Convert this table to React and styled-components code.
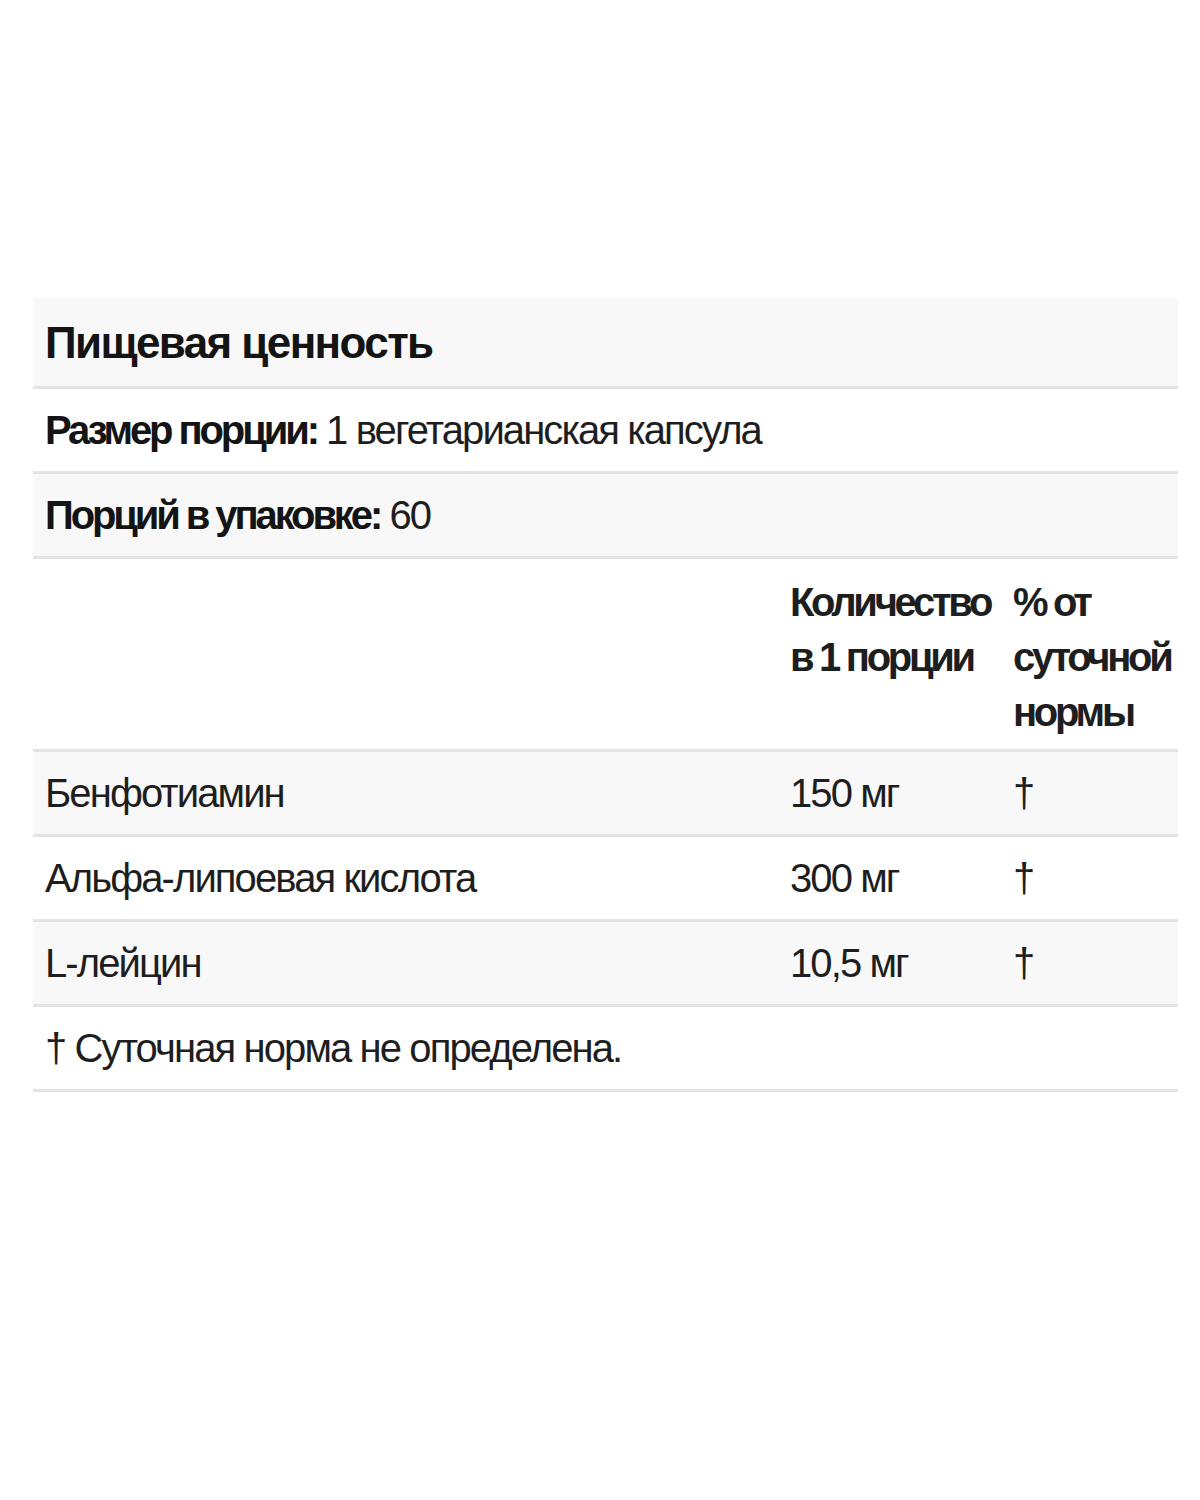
import React from "react";
import styled, { createGlobalStyle } from "styled-components";

const GlobalStyle = createGlobalStyle`
    body {
        margin: 0;
        background: #fff;
        font-family: "Liberation Sans", Arial, sans-serif;
        color: #1e1e1e;
    }
`;

const Page = styled.div`
    width: 1200px;
    height: 1500px;
    padding: 298px 22px 0 33px;
    box-sizing: border-box;
`;

const Table = styled.div`
    display: grid;
    grid-template-columns: 745px 223px minmax(0, 1fr);
`;

const Row = styled.div`
    grid-column: 1 / -1;
    display: grid;
    grid-template-columns: subgrid;
    background: ${(p) => (p.$shade ? "#f8f8f8" : "#fff")};
    border-bottom: 3px solid #e4e4e4;
`;

const Cell = styled.div`
    padding: ${(p) => (p.$tall ? "16px 12px 9px" : "13px 12px")};
    font-size: 40px;
    letter-spacing: ${(p) => (p.$bold ? "-3.3px" : "-1.9px")};
    line-height: ${(p) => (p.$tall ? "55px" : "56px")};
    font-weight: ${(p) => (p.$bold ? 700 : 400)};
    grid-column: ${(p) => p.$span || "auto"};
    white-space: nowrap;
`;

const Title = styled.div`
    grid-column: 1 / -1;
    padding: 14px 12px 12px;
    font-size: 44px;
    letter-spacing: -1.6px;
    line-height: 62px;
    font-weight: 700;
    color: #141414;
`;

const Label = styled.span`
    font-weight: 700;
    letter-spacing: -3.1px;
    color: #141414;
`;

const ingredients = [
    { name: "Бенфотиамин", amount: "150 мг" },
    { name: "Альфа-липоевая кислота", amount: "300 мг" },
    { name: "L-лейцин", amount: "10,5 мг" }
];

const App = () => {
    return (
        <>
            <GlobalStyle />
            <Page>
                <Table>
                    <Row $shade>
                        <Title>Пищевая ценность</Title>
                    </Row>
                    <Row>
                        <Cell $span="1 / -1">
                            <Label>Размер порции:</Label> 1 вегетарианская капсула
                        </Cell>
                    </Row>
                    <Row $shade>
                        <Cell $span="1 / -1">
                            <Label>Порций в упаковке:</Label> 60
                        </Cell>
                    </Row>
                    <Row>
                        <Cell $tall />
                        <Cell $tall $bold>
                            Количество<br />в 1 порции
                        </Cell>
                        <Cell $tall $bold>
                            % от<br />суточной<br />нормы
                        </Cell>
                    </Row>
                    {ingredients.map((item, i) => (
                        <Row key={item.name} $shade={i % 2 === 0}>
                            <Cell>{item.name}</Cell>
                            <Cell>{item.amount}</Cell>
                            <Cell>†</Cell>
                        </Row>
                    ))}
                    <Row>
                        <Cell $span="1 / -1">† Суточная норма не определена.</Cell>
                    </Row>
                </Table>
            </Page>
        </>
    );
};

export default App;
